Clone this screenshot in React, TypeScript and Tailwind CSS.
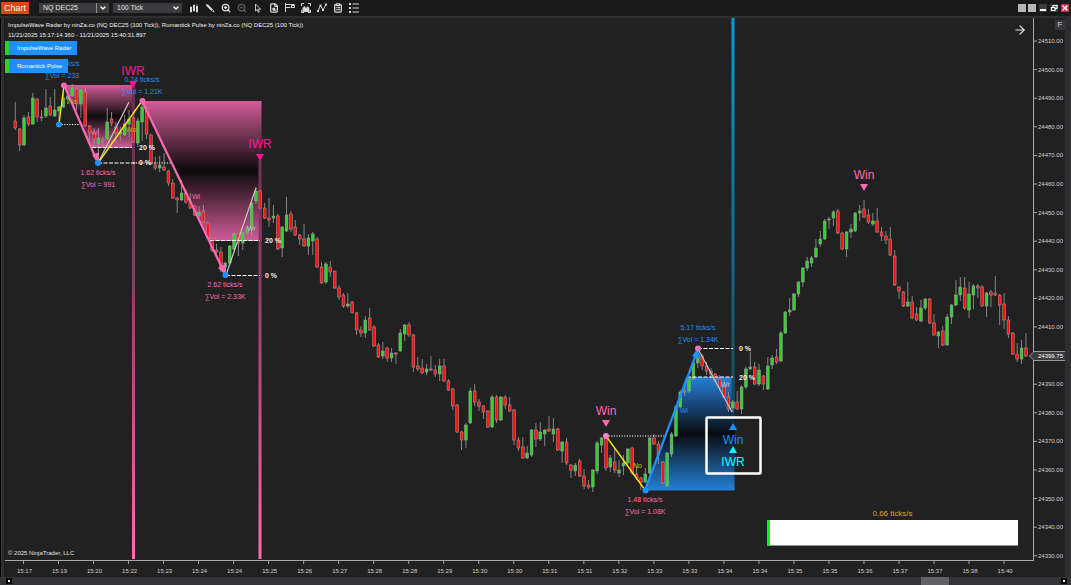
import { ArrowRight, ChevronDown, ClipboardList, FileSearch, X, ZoomIn, ZoomOut } from "lucide-react";

// open, close, high, low as chart heights, one entry per bar
const bars: number[][] = [
    [121, 128, 102, 130], [129, 145, 128, 151], [145, 118, 115, 146], [117, 124, 112, 126], [124, 98, 93, 125], [99, 117, 98, 122],
    [117, 118, 110, 121], [116, 108, 89, 118], [106, 115, 97, 116], [116, 110, 89, 117], [111, 107, 106, 124], [107, 98, 87, 108],
    [99, 96, 92, 104], [96, 88, 84, 97], [89, 104, 88, 110], [104, 90, 89, 118], [92, 126, 88, 127], [126, 133, 125, 140],
    [133, 139, 128, 148], [144, 138, 128, 160], [140, 141, 137, 147], [139, 122, 108, 140], [119, 123, 112, 126], [127, 133, 122, 143],
    [134, 132, 127, 141], [135, 124, 115, 136], [124, 119, 110, 137], [118, 142, 117, 143], [143, 121, 118, 147], [122, 107, 102, 141],
    [108, 134, 107, 139], [135, 164, 134, 165], [165, 168, 157, 170], [168, 165, 156, 172], [167, 170, 153, 171], [171, 183, 170, 186],
    [183, 198, 179, 199], [198, 200, 197, 213], [200, 193, 180, 201], [193, 202, 190, 204], [202, 208, 193, 209], [206, 215, 205, 216],
    [216, 212, 206, 217], [211, 222, 205, 223], [223, 238, 222, 239], [239, 250, 238, 252], [250, 252, 244, 256], [252, 269, 247, 272],
    [267, 263, 262, 273], [263, 246, 245, 265], [249, 234, 232, 251], [234, 243, 233, 256], [243, 233, 232, 250], [233, 228, 225, 235],
    [229, 203, 202, 236], [201, 191, 187, 204], [191, 208, 190, 209], [208, 218, 203, 219], [218, 220, 198, 227], [218, 216, 205, 223],
    [216, 249, 214, 250], [248, 227, 226, 257], [231, 215, 197, 232], [214, 229, 211, 232], [227, 235, 220, 236], [235, 239, 234, 245],
    [239, 246, 224, 247], [246, 238, 234, 255], [241, 234, 232, 255], [239, 267, 237, 268], [267, 283, 262, 284], [282, 264, 262, 284],
    [267, 272, 261, 277], [271, 288, 271, 289], [288, 297, 285, 300], [295, 306, 293, 308], [306, 304, 293, 308], [302, 313, 301, 313],
    [313, 330, 312, 335], [330, 333, 326, 337], [333, 320, 316, 338], [318, 330, 308, 331], [327, 346, 325, 347], [345, 357, 343, 358],
    [356, 351, 342, 359], [348, 358, 347, 362], [358, 353, 348, 362], [353, 354, 352, 364], [351, 333, 329, 352], [334, 325, 324, 341],
    [325, 335, 322, 337], [335, 367, 334, 372], [366, 369, 357, 371], [368, 373, 359, 374], [372, 369, 364, 375], [369, 370, 356, 371],
    [370, 374, 365, 377], [374, 366, 359, 381], [366, 381, 359, 382], [381, 390, 379, 391], [389, 406, 388, 410], [405, 432, 404, 433],
    [432, 440, 431, 450], [440, 425, 423, 448], [423, 391, 388, 424], [391, 402, 384, 406], [402, 406, 399, 411], [406, 412, 405, 419],
    [411, 427, 410, 428], [427, 397, 395, 428], [397, 420, 395, 423], [420, 397, 396, 421], [397, 405, 395, 409], [405, 411, 397, 412],
    [410, 440, 409, 445], [440, 448, 437, 451], [447, 458, 437, 459], [458, 453, 446, 459], [455, 430, 429, 457], [430, 439, 423, 447],
    [439, 432, 422, 441], [434, 430, 429, 446], [429, 431, 416, 432], [434, 429, 418, 442], [429, 450, 428, 451], [451, 442, 441, 463],
    [442, 463, 438, 465], [465, 470, 464, 478], [471, 465, 463, 476], [461, 476, 459, 477], [476, 486, 469, 489], [485, 487, 480, 489],
    [487, 470, 469, 492], [471, 443, 441, 474], [445, 438, 437, 453], [438, 468, 437, 471], [467, 458, 455, 472], [462, 470, 447, 473],
    [473, 470, 460, 477], [466, 463, 455, 475], [463, 449, 448, 465], [448, 473, 447, 475], [474, 478, 467, 480], [478, 482, 477, 490],
    [482, 474, 468, 483], [473, 438, 437, 474], [438, 444, 434, 445], [444, 455, 441, 464], [462, 483, 461, 484], [486, 453, 452, 487],
    [454, 434, 432, 457], [436, 407, 405, 437], [407, 392, 390, 408], [391, 392, 383, 396], [391, 379, 378, 393], [379, 363, 362, 380],
    [363, 354, 350, 368], [356, 366, 354, 370], [366, 371, 362, 375], [371, 374, 368, 378], [374, 379, 373, 382], [379, 387, 375, 391],
    [387, 397, 380, 398], [397, 409, 392, 412], [408, 402, 400, 412], [402, 409, 391, 410], [409, 387, 385, 414], [387, 369, 367, 389],
    [369, 367, 352, 370], [367, 384, 362, 385], [384, 370, 364, 386], [376, 384, 375, 390], [389, 366, 357, 390], [365, 358, 355, 369],
    [357, 362, 349, 364], [361, 333, 331, 362], [333, 312, 311, 334], [312, 310, 298, 316], [310, 294, 293, 311], [294, 282, 281, 297],
    [282, 268, 267, 287], [268, 261, 257, 271], [263, 258, 256, 267], [257, 248, 239, 258], [244, 239, 231, 247], [239, 221, 219, 240],
    [220, 219, 217, 229], [218, 212, 210, 226], [211, 233, 209, 234], [233, 249, 232, 250], [249, 232, 231, 257], [232, 229, 224, 238],
    [231, 213, 212, 232], [213, 211, 205, 221], [209, 217, 200, 218], [215, 222, 209, 224], [224, 221, 213, 226], [221, 232, 208, 233],
    [232, 236, 227, 241], [236, 240, 231, 244], [239, 255, 227, 256], [256, 285, 250, 286], [287, 291, 286, 299], [292, 306, 291, 307],
    [306, 302, 282, 307], [302, 318, 296, 319], [314, 320, 307, 321], [321, 308, 300, 322], [308, 299, 298, 310], [299, 323, 298, 324],
    [323, 335, 314, 336], [336, 332, 331, 348], [331, 345, 326, 346], [345, 317, 314, 346], [317, 305, 304, 324], [305, 295, 280, 306],
    [295, 287, 277, 301], [288, 308, 277, 310], [310, 294, 282, 318], [295, 286, 284, 309], [286, 288, 284, 298], [287, 306, 285, 307],
    [306, 293, 292, 317], [292, 295, 290, 307], [293, 295, 276, 296], [295, 305, 294, 325], [304, 320, 293, 329], [320, 334, 316, 338],
    [333, 354, 332, 355], [354, 359, 343, 362], [359, 348, 340, 364], [348, 356, 333, 357],
];

const times = [
    "15:17", "15:19", "15:20", "15:22", "15:23", "15:24", "15:24", "15:25", "15:26", "15:27", "15:28", "15:28", "15:29", "15:30",
    "15:30", "15:31", "15:31", "15:32", "15:33", "15:33", "15:34", "15:34", "15:35", "15:35", "15:36", "15:37", "15:37", "15:38", "15:40",
];

const lastPrice = 24399.75;
const pink = "#ff69b4";
const blue = "#1e90ff";

const Candles = () => (
    <g>
        {bars.map(([open, close, high, low], i) => {
            const x = 15.3 + i * 4.375;
            return (
                <g key={i}>
                    <line x1={x} x2={x} y1={high} y2={low} stroke="#a0a0a0" strokeWidth="0.8" />
                    <rect
                        x={x - 1.4}
                        y={Math.min(open, close)}
                        width="2.8"
                        height={Math.abs(close - open)}
                        fill={close > open ? "#ff1010" : "#32d232"}
                        stroke="#a8a0a0"
                        strokeWidth="0.5"
                    />
                </g>
            );
        })}
    </g>
);

const PriceAxis = () => (
    <g fill="#d0d0d0" fontSize="6">
        <path d="M1033.5 18V560.5" stroke="#a8a8a8" />
        {Array.from({ length: 19 }, (_, i) => {
            const y = 41 + i * 28.6;
            const price = 24510 - i * 10;
            return (
                <g key={i}>
                    <line x1="1034" x2="1037" y1={y} y2={y} stroke="#a8a8a8" />
                    {/* the last price tag covers its nearest label */}
                    {Math.abs(price - lastPrice) > 2 && (
                        <text x="1038" y={y + 2}>
                            {price.toFixed(2)}
                        </text>
                    )}
                </g>
            );
        })}
        <path d="M1029.5 356L1034 351.5H1065.500V360.5H1034Z" fill="#3c3c3e" stroke="#9a9a9a" />
        <text x="1038" y="358" fill="#fff">
            {lastPrice.toFixed(2)}
        </text>
    </g>
);

const TimeAxis = () => (
    <g fill="#d0d0d0" fontSize="6" textAnchor="middle">
        <path d="M5 560.5H1034" stroke="#a8a8a8" />
        {times.map((t, i) => {
            const x = 23.5 + i * 35.02;
            return (
                <g key={i}>
                    <line x1={x} x2={x} y1="561" y2="564" stroke="#a8a8a8" />
                    <text x={x + 1} y="573">
                        {t}
                    </text>
                </g>
            );
        })}
    </g>
);

const Stat = ({ x, y, color, rate, vol }: any) => (
    <g fill={color} fontSize="7" textAnchor="middle">
        <text x={x} y={y}>
            {rate} ticks/s
        </text>
        <text x={x} y={y + 12}>
            ∑Vol = {vol}
        </text>
    </g>
);

const Dot = ({ x, y, color }: any) => <circle cx={x} cy={y} r="3" fill={color} />;

const Chart = () => (
    <svg viewBox="5 18 1060 559" className="block w-full" fontFamily="'Liberation Sans', Arial, sans-serif" role="img" aria-label="NQ DEC25">
        <defs>
            <linearGradient id="pinkBox" x1="0" y1="0" x2="0" y2="1">
                <stop offset="0" stopColor="#d25c99" />
                <stop offset="0.5" stopColor="#0c0a0b" />
                <stop offset="1" stopColor="#d25c99" />
            </linearGradient>
            <linearGradient id="blueBox" x1="0" y1="0" x2="0" y2="1">
                <stop offset="0" stopColor="#2580d8" />
                <stop offset="0.5" stopColor="#090c10" />
                <stop offset="1" stopColor="#2580d8" />
            </linearGradient>
            <linearGradient id="pinkLine" x1="0" y1="85" x2="0" y2="559" gradientUnits="userSpaceOnUse">
                <stop offset="0" stopColor="#6a2c4e" />
                <stop offset="0.4" stopColor="#8c3a66" />
                <stop offset="1" stopColor="#ff69b4" />
            </linearGradient>
            <linearGradient id="blueLine" x1="0" y1="18" x2="0" y2="412" gradientUnits="userSpaceOnUse">
                <stop offset="0" stopColor="#0a9cd8" />
                <stop offset="1" stopColor="#14485c" />
            </linearGradient>
        </defs>

        <path d="M64 85H132V148H91Z" fill="url(#pinkBox)" />
        <path d="M142 101H261.500V241H210Z" fill="url(#pinkBox)" />
        <path d="M686 377H734.5V490.5H645Z" fill="url(#blueBox)" />
        <rect x="132" y="85" width="3" height="474" fill="url(#pinkLine)" />
        <rect x="258.500" y="160" width="3" height="399" fill="url(#pinkLine)" />
        <rect x="731.5" y="18" width="3" height="395" fill="url(#blueLine)" />

        <Candles />

        <g fill="none" stroke="#fff" strokeWidth="1.2">
            <path d="M59 124.5H81M133 163H172M606 436H666" strokeDasharray="1.2 1.4" />
            <path d="M92 147.5H132M98 163H137M210 240.5H260M226 275.5H260M687 377H733M698 348.5H733" strokeDasharray="4 1.5" />
            <path d="M98 163L129 102M226 275L256 188M698 349L732 412" stroke="#c8c8c8" />
        </g>
        <path d="M59 124L64 85M98 163L142 101M606 436L645 490" fill="none" stroke="#ffeb14" strokeWidth="1.3" />
        <g stroke={pink} strokeWidth="2.2">
            <path d="M64 85L97 161M142 101L225 274" />
            <path d="M92 155L98 163L99 152ZM218 268L226 275V264Z" fill={pink} strokeWidth="0" />
        </g>
        <path d="M645 490L697 352" stroke={blue} strokeWidth="2.200" />
        <path d="M698 348L692 356L700 359Z" fill={blue} />

        <Dot x={59} y={124.5} color={blue} />
        <Dot x={64} y={85.5} color={pink} />
        <Dot x={98} y={163} color={blue} />
        <Dot x={142.5} y={101} color={pink} />
        <Dot x={225.5} y={275} color={blue} />
        <Dot x={606} y={436} color="#ff82c8" />
        <Dot x={645.5} y={490.5} color={blue} />
        <Dot x={698} y={348.5} color="#e878b8" />

        <g fontSize="7">
            <text x="68" y="104" fill="#c8b414">No</text>
            <text x="91" y="135" fill={pink}>Wi</text>
            <text x="126" y="132" fill="#c8b414">Wo</text>
            <text x="192" y="199" fill={pink}>Wi</text>
            <text x="247" y="231" fill="#c8c8c8">Wr</text>
            <text x="633" y="468" fill="#d8c814">No</text>
            <text x="680" y="413" fill={blue}>Wi</text>
            <text x="721" y="387" fill="#c8c8c8">Wr</text>
        </g>
        <g fontSize="7" fontWeight="bold" fill="#f0f0f0">
            <text x="139" y="150">20 %</text>
            <text x="139" y="165">0 %</text>
            <text x="265" y="243">20 %</text>
            <text x="265" y="278">0 %</text>
            <text x="739" y="351">0 %</text>
            <text x="739" y="380">20 %</text>
        </g>

        <Stat x={62} y={66} color={blue} rate="0.94" vol="233" />
        <Stat x={142} y={82} color={blue} rate="0.74" vol="1.21K" />
        <Stat x={98} y={175} color={pink} rate="1.62" vol="991" />
        <Stat x={225} y={287} color={pink} rate="2.62" vol="2.33K" />
        <Stat x={645} y={502} color={pink} rate="1.48" vol="1.08K" />
        <Stat x={698} y={330} color={blue} rate="5.17" vol="1.34K" />

        <g fontSize="12" textAnchor="middle">
            <g fill="#ff1493">
                <text x="133" y="75">IWR</text>
                <path d="M129 81H137L133 88Z" />
                <text x="260" y="148">IWR</text>
                <path d="M256 154H264L260 161Z" />
            </g>
            <g fill={pink}>
                <text x="606" y="415">Win</text>
                <path d="M602 420H610L606 427Z" />
                <text x="864" y="179">Win</text>
                <path d="M860 184H868L864 191Z" />
            </g>
            <path d="M733 423L737 430H729Z" fill={blue} />
            <text x="733" y="444" fill={blue}>Win</text>
            <path d="M733 446L737 453H729Z" fill="#00ffff" />
            <text x="733" y="466" fill="#00ffff">IWR</text>
        </g>
        <rect x="706.5" y="417.5" width="54" height="56" rx="1" fill="none" stroke="#fff" strokeWidth="2.5" />

        <text x="892.5" y="516" fontSize="8" textAnchor="middle" fill="#daa520">
            0.66 ticks/s
        </text>
        <rect x="767" y="520" width="251" height="25.5" fill="#fff" />
        <rect x="767" y="520" width="3" height="25.5" fill="#00ff00" />

        <text x="8" y="555" fontSize="6" fill="#e0e0e0">
            © 2025 NinjaTrader, LLC
        </text>
        <PriceAxis />
        <TimeAxis />
    </svg>
);

const tool = "flex w-4 items-center justify-center text-[#d8d8d8]";

const Toolbar = () => (
    <header className="flex h-4 items-center bg-[#19191a]">
        <button className="ml-px h-3 w-7 shrink-0 bg-[#e8410c] text-[9px] leading-3 text-white">Chart</button>
        <div className="relative ml-2.5 flex h-2.5 w-[70px] items-center bg-[#3c3c40]">
            <select aria-label="Instrument" className="h-full w-full appearance-none pl-1 text-[7px] leading-[10px] text-[#e0e0e0]">
                <option>NQ DEC25</option>
            </select>
            <ChevronDown size={8} strokeWidth={4} className="pointer-events-none absolute right-0.5 text-white" />
            <span className="pointer-events-none absolute right-3 h-full w-px bg-[#8c8c8c]" />
        </div>
        <div className="relative ml-1 flex h-2.5 w-[69px] items-center bg-[#3c3c40]">
            <select aria-label="Interval" className="h-full w-full appearance-none pl-1 text-[7px] leading-[10px] text-[#e0e0e0]">
                <option>100 Tick</option>
            </select>
            <ChevronDown size={8} strokeWidth={4} className="pointer-events-none absolute right-0.5 text-white" />
        </div>
        <nav className="ml-1 flex flex-1">
            <button aria-label="Bar type" className={tool}>
                <svg width="10" height="10" viewBox="0 0 10 10" fill="currentColor">
                    <path d="M1 4h2v5H1zM4 2h2v6H4zM7 3h2v6H7zM1.700 3h.6v7h-.6zM4.700 1h.6v8h-.6zM7.7 1h.6v9h-.6z" />
                </svg>
            </button>
            <button aria-label="Draw" className={tool}>
                <svg width="10" height="10" viewBox="0 0 10 10" fill="currentColor">
                    <path d="M1 1l2 .5 5 5-1.600 1.600-5-5zM8.500 7l1 2.500L7 8.500z" />
                </svg>
            </button>
            <button aria-label="Zoom in" className={tool}>
                <ZoomIn size={10} strokeWidth={3} />
            </button>
            <button aria-label="Zoom out" className="flex w-4 items-center justify-center text-[#606060]">
                <ZoomOut size={10} strokeWidth={3} />
            </button>
            <button aria-label="Cursor" className={tool}>
                <svg width="10" height="10" viewBox="0 0 10 10" fill="none" stroke="currentColor" strokeWidth="0.9">
                    <path d="M2.500 1v7l1.700-1.500L5.400 9.300l1-.5-1.200-2.600H7.700z" />
                </svg>
            </button>
            <button aria-label="Data box" className={tool}>
                <FileSearch size={10} strokeWidth={3} />
            </button>
            <button aria-label="Chart trader" className={tool}>
                <svg width="10" height="10" viewBox="0 0 10 10" fill="none" stroke="currentColor">
                    <path d="M.5 0v9M.5 1.500h9M.5 4.500h5M6.500 2.500h3v2h-3z" />
                </svg>
            </button>
            <button aria-label="Indicators" className={tool}>
                <svg width="10" height="10" viewBox="0 0 10 10" fill="none" stroke="currentColor">
                    <path d="M.5 3V.5H3M7 .5h2.5V3M.5 7v2.5H3M7 9.5h2.5V7" />
                    <path d="M1.5 9V5l2-2L5 5l2-2 1.5 3v3z" fill="currentColor" stroke="none" />
                </svg>
            </button>
            <button aria-label="Strategies" className={tool}>
                <svg width="10" height="10" viewBox="0 0 10 10" fill="none" stroke="currentColor">
                    <path d="M1 8L3.5 2.5 6 7 9 1.5" />
                    <path d="M0 7h2v2H0zM2.5 1.5h2v2h-2zM5 6h2v2H5zM8 .5h2v2H8z" fill="currentColor" stroke="none" />
                </svg>
            </button>
            <button aria-label="Strategy list" className={tool}>
                <ClipboardList size={10} strokeWidth={3} />
            </button>
            <button aria-label="Properties" className={tool}>
                <svg width="10" height="10" viewBox="0 0 10 10" fill="currentColor">
                    <path d="M0 0h2v2H0zM0 4h2v2H0zM0 8h2v2H0zM3.500 .5H10v1H3.500zM3.500 4.500H10v1H3.500zM3.500 8.500H10v1H3.500z" />
                </svg>
            </button>
        </nav>
        <div className="mr-0.5 flex gap-0.5">
            <button aria-label="Link instrument" className="size-2 bg-[#b8b8b8]" />
            <button aria-label="Link interval" className="mr-px size-2 bg-[#b8b8b8]" />
            <button aria-label="Minimize" className="flex size-2 items-end bg-[#3c3c3c] p-px">
                <span className="h-0.5 w-full bg-white" />
            </button>
            <button aria-label="Restore" className="ml-px flex size-2 items-center justify-center bg-[#3c3c3c] text-white">
                <svg width="8" height="8" viewBox="0 0 8 8" fill="none" stroke="currentColor" strokeWidth="1.2">
                    <path d="M3 3V1.5h4v3H5M1.5 3.5H5v3H1.5z" />
                </svg>
            </button>
            <button aria-label="Close" className="ml-px flex size-2 items-center justify-center bg-[#c42838] text-white">
                <X size={8} strokeWidth={5} />
            </button>
        </div>
    </header>
);

export default function App() {
    return (
        <div className="min-h-screen bg-[#2f2f32] font-['Liberation_Sans',Arial,sans-serif]">
            <Toolbar />
            <main className="mt-0.5 flex">
                <div className="w-1 shrink-0 border-l border-black" />
                <section className="relative min-w-0 flex-1 border-l border-[#1a1a1a] bg-[#212121]">
                    <Chart />
                    <div className="absolute left-[3px] top-0.5 text-[6px] leading-[10px] text-[#f0f0f0]">
                        <p>ImpulseWave Radar by ninZa.co (NQ DEC25 (100 Tick)), Romantick Pulse by ninZa.co (NQ DEC25 (100 Tick))</p>
                        <p>11/21/2025 15:17:14.360 - 11/21/2025 15:40:31.897</p>
                    </div>
                    <div className="absolute left-0 top-[23px] flex flex-col items-start gap-1 text-[6px] leading-[14px] text-white">
                        <button className="border-l-4 border-[#32cd32] bg-[#1e90ff] pl-2 pr-1.5">ImpulseWave Radar</button>
                        <button className="border-l-4 border-[#32cd32] bg-[#1e90ff] pl-2 pr-1.5">Romantick Pulse</button>
                    </div>
                    <button aria-label="Go to last bar" className="absolute right-[38px] top-[5px] text-[#e8e8e8]">
                        <ArrowRight size={14} strokeWidth={2} />
                    </button>
                    <button className="absolute right-0 top-0.5 size-2.5 bg-[#38383a] text-[8px] leading-[10px] text-[#d0d0d0]">F</button>
                </section>
                <div className="w-1.5 shrink-0" />
            </main>
            <footer className="flex h-2 items-center justify-between bg-[#353537] pl-1.5 pr-1">
                <button aria-label="Scroll left" className="flex size-1.5 items-center justify-center bg-black">
                    <span className="size-0.5 bg-white" />
                </button>
                <div className="flex h-full flex-1 justify-end pr-28">
                    <span className="h-full w-7 bg-[#626264]" />
                </div>
                <button aria-label="Scroll right" className="flex size-1.5 items-center justify-center bg-black">
                    <span className="size-0.5 bg-white" />
                </button>
            </footer>
        </div>
    );
}
